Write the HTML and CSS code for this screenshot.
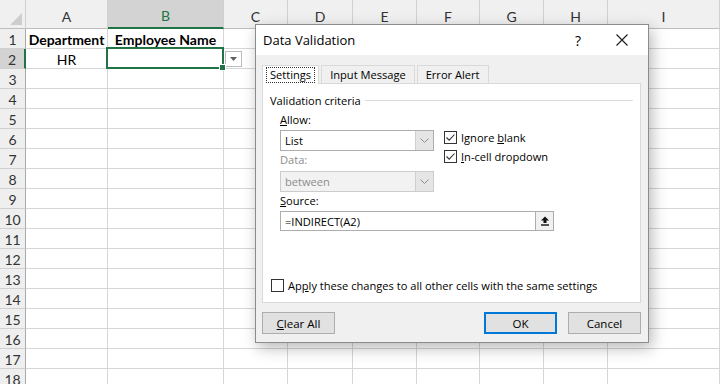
FILE: index.html
```html
<!DOCTYPE html>
<html lang="en">
<head>
    <meta charset="UTF-8">
    <title>Data Validation</title>
    <link rel="stylesheet" href="styles.css">
</head>
<body>
    <!-- Worksheet -->
    <div class="sheet">
        <div class="row head">
            <div class="corner"></div>
            <div class="ch">A</div>
            <div class="ch sel">B</div>
            <div class="ch">C</div>
            <div class="ch">D</div>
            <div class="ch">E</div>
            <div class="ch">F</div>
            <div class="ch">G</div>
            <div class="ch">H</div>
            <div class="ch">I</div>
        </div>
        <div class="row">
            <div class="rh">1</div>
            <div class="c bold">Department</div>
            <div class="c bold">Employee Name</div>
            <div></div><div></div><div></div><div></div><div></div><div></div><div></div>
        </div>
        <div class="row">
            <div class="rh sel">2</div>
            <div class="c">HR</div>
            <div class="c active">
                <span class="handle"></span>
                <span class="cell-dd">
                    <svg width="7" height="4" viewBox="0 0 7 4"><path d="M0 0 H7 L3.5 4 Z" fill="#606060"/></svg>
                </span>
            </div>
            <div></div><div></div><div></div><div></div><div></div><div></div><div></div>
        </div>
        <div class="row"><div class="rh">3</div><div></div><div></div><div></div><div></div><div></div><div></div><div></div><div></div><div></div></div>
        <div class="row"><div class="rh">4</div><div></div><div></div><div></div><div></div><div></div><div></div><div></div><div></div><div></div></div>
        <div class="row"><div class="rh">5</div><div></div><div></div><div></div><div></div><div></div><div></div><div></div><div></div><div></div></div>
        <div class="row"><div class="rh">6</div><div></div><div></div><div></div><div></div><div></div><div></div><div></div><div></div><div></div></div>
        <div class="row"><div class="rh">7</div><div></div><div></div><div></div><div></div><div></div><div></div><div></div><div></div><div></div></div>
        <div class="row"><div class="rh">8</div><div></div><div></div><div></div><div></div><div></div><div></div><div></div><div></div><div></div></div>
        <div class="row"><div class="rh">9</div><div></div><div></div><div></div><div></div><div></div><div></div><div></div><div></div><div></div></div>
        <div class="row"><div class="rh">10</div><div></div><div></div><div></div><div></div><div></div><div></div><div></div><div></div><div></div></div>
        <div class="row"><div class="rh">11</div><div></div><div></div><div></div><div></div><div></div><div></div><div></div><div></div><div></div></div>
        <div class="row"><div class="rh">12</div><div></div><div></div><div></div><div></div><div></div><div></div><div></div><div></div><div></div></div>
        <div class="row"><div class="rh">13</div><div></div><div></div><div></div><div></div><div></div><div></div><div></div><div></div><div></div></div>
        <div class="row"><div class="rh">14</div><div></div><div></div><div></div><div></div><div></div><div></div><div></div><div></div><div></div></div>
        <div class="row"><div class="rh">15</div><div></div><div></div><div></div><div></div><div></div><div></div><div></div><div></div><div></div></div>
        <div class="row"><div class="rh">16</div><div></div><div></div><div></div><div></div><div></div><div></div><div></div><div></div><div></div></div>
        <div class="row"><div class="rh">17</div><div></div><div></div><div></div><div></div><div></div><div></div><div></div><div></div><div></div></div>
        <div class="row"><div class="rh">18</div><div></div><div></div><div></div><div></div><div></div><div></div><div></div><div></div><div></div></div>
    </div>

    <!-- Data Validation dialog -->
    <div class="dialog">
        <div class="titlebar">
            <span class="title">Data Validation</span>
            <span class="help">?</span>
            <span class="close">
                <svg width="12" height="12" viewBox="0 0 12 12"><path d="M0.5 0.5 L11.5 11.5 M11.5 0.5 L0.5 11.5" stroke="#1a1a1a" stroke-width="1.1"/></svg>
            </span>
        </div>
        <div class="dlg-body">
            <div class="tabs">
                <div class="tab on"><span class="focus">Settings</span></div>
                <div class="tab">Input Message</div>
                <div class="tab">Error Alert</div>
            </div>
            <div class="panel">
                <div class="group"><span>Validation criteria</span><i class="rule"></i></div>
                <div class="criteria">
                    <div class="fields">
                        <div class="lbl"><u>A</u>llow:</div>
                        <div class="select">
                            <span class="val">List</span>
                            <span class="arrow"><svg width="9" height="5" viewBox="0 0 9 5"><path d="M0.5 0.5 L4.5 4.5 L8.5 0.5" fill="none" stroke="#8a8a8a"/></svg></span>
                        </div>
                        <div class="lbl dim">Data:</div>
                        <div class="select off">
                            <span class="val">between</span>
                            <span class="arrow"><svg width="9" height="5" viewBox="0 0 9 5"><path d="M0.5 0.5 L4.5 4.5 L8.5 0.5" fill="none" stroke="#8a8a8a"/></svg></span>
                        </div>
                    </div>
                    <div class="checks">
                        <div class="check">
                            <span class="box"><svg width="11" height="11" viewBox="0 0 11 11"><path d="M1.5 5.5 L4.2 8.2 L9.5 2.5" fill="none" stroke="#333" stroke-width="1.1"/></svg></span>
                            <span>Ignore <u>b</u>lank</span>
                        </div>
                        <div class="check">
                            <span class="box"><svg width="11" height="11" viewBox="0 0 11 11"><path d="M1.5 5.5 L4.2 8.2 L9.5 2.5" fill="none" stroke="#333" stroke-width="1.1"/></svg></span>
                            <span><u>I</u>n-cell dropdown</span>
                        </div>
                    </div>
                </div>
                <div class="lbl src-lbl"><u>S</u>ource:</div>
                <div class="source">
                    <span class="val">=INDIRECT(A2)</span>
                    <span class="pick">
                        <svg width="10" height="10" viewBox="0 0 10 10"><path d="M5 0.5 L9 4.5 H6.5 V7 H3.5 V4.5 H1 Z" fill="#111"/><rect x="1" y="8.3" width="8" height="1.4" fill="#111"/></svg>
                    </span>
                </div>
                <div class="check apply">
                    <span class="box"></span>
                    <span>Ap<u>p</u>ly these changes to all other cells with the same settings</span>
                </div>
            </div>
            <div class="buttons">
                <button class="btn"><u>C</u>lear All</button>
                <span class="spacer"></span>
                <button class="btn ok">OK</button>
                <button class="btn">Cancel</button>
            </div>
        </div>
    </div>
</body>
</html>
```

FILE: styles.css
```css
body {
    margin: 0;
    width: 720px;
    height: 384px;
    overflow: hidden;
    background: #fff;
    position: relative;
    font-family: Lato, "Open Sans", sans-serif;
}

/* Worksheet grid */
.sheet {
    display: flex;
    flex-direction: column;
}

.row {
    display: grid;
    grid-template-columns: 26px 82px 116px 64px 65px 64px 63px 64px 64px 112px;
    height: 20px;
}

.row > div {
    box-sizing: border-box;
    border-right: 1px solid #d6d6d6;
    border-bottom: 1px solid #d6d6d6;
}

.row.head {
    height: 29px;
}

.row.head > div {
    background: #f0f0f0;
    border-bottom: 1px solid #bdbdbd;
    border-right: 1px solid #d0d0d0;
}

.corner {
    position: relative;
}

.corner::after {
    content: '';
    position: absolute;
    right: 3px;
    bottom: 3px;
    border-left: 12px solid transparent;
    border-bottom: 12px solid #cdcdcd;
}

.ch {
    display: flex;
    align-items: center;
    justify-content: center;
    padding-top: 4px;
    font-size: 14px;
    color: #333;
}

.row.head > .ch.sel {
    background: #d3d3d3;
    color: #217346;
    border-bottom: 2px solid #217346;
}

.row > .rh {
    background: #efefef;
    border-right: 1px solid #a9a9a9;
    border-bottom: 1px solid #d0d0d0;
    font-size: 14px;
    color: #333;
    display: flex;
    align-items: center;
    justify-content: center;
    padding-top: 1px;
}

.row > .rh.sel {
    background: #d3d3d3;
    border-right: 2px solid #217346;
}

.c {
    display: flex;
    align-items: center;
    justify-content: center;
    font-size: 14px;
    color: #000;
    padding-top: 1px;
}

.bold {
    font-weight: bold;
}

.c.active {
    position: relative;
}

.c.active::after {
    content: '';
    position: absolute;
    left: -2px;
    top: -2px;
    right: -1px;
    bottom: -1px;
    border: 2px solid #217346;
}

.handle {
    position: absolute;
    right: -3px;
    bottom: -3px;
    width: 5px;
    height: 5px;
    background: #217346;
    border: 1px solid #fff;
    z-index: 1;
}

.cell-dd {
    position: absolute;
    left: 117px;
    top: 2px;
    width: 15px;
    height: 14px;
    border: 1px solid #bbb;
    background: #fff;
    display: flex;
    align-items: center;
    justify-content: center;
}

/* Dialog */
.dialog {
    position: absolute;
    left: 255px;
    top: 24px;
    width: 392px;
    height: 317px;
    border: 1px solid #8c8c8c;
    background: #f0f0f0;
    box-shadow: 3px 5px 14px rgba(0,0,0,0.28);
    font-family: "Open Sans", "Noto Sans", sans-serif;
    font-size: 11.1px;
    color: #000;
    display: flex;
    flex-direction: column;
}

.titlebar {
    height: 30px;
    background: #fff;
    display: flex;
    align-items: center;
    padding-left: 7px;
}

.title {
    font-size: 13px;
    flex: 1;
}

.help {
    font-size: 14px;
    width: 20px;
    text-align: center;
    margin-right: 22px;
}

.close {
    display: flex;
    width: 24px;
    margin-right: 14px;
    justify-content: center;
}

.dlg-body {
    padding: 10px 7px 0 6px;
}

.tabs {
    display: flex;
    padding-left: 2px;
    height: 18px;
    align-items: flex-end;
}

.tab {
    height: 18px;
    box-sizing: border-box;
    border: 1px solid #d9d9d9;
    border-bottom: none;
    padding: 0 8px;
    margin-right: 2px;
    display: flex;
    align-items: center;
    background: #f0f0f0;
}

.tab.on {
    background: #fff;
    margin-left: -2px;
    padding: 0 3px 0 3px;
    height: 19px;
    margin-bottom: -1px;
    position: relative;
    z-index: 1;
}

.focus {
    border: 1px dotted #333;
    padding: 0 3px;
    line-height: 14px;
}

.panel {
    height: 220px;
    box-sizing: border-box;
    background: #fff;
    border: 1px solid #d9d9d9;
    padding-top: 8px;
}

.group {
    display: flex;
    align-items: center;
    height: 16px;
    padding: 0 7px;
}

.group .rule {
    flex: 1;
    height: 1px;
    background: #dcdcdc;
    margin-left: 4px;
}

.criteria {
    display: flex;
    padding-left: 17px;
    margin-top: 4px;
}

.fields {
    width: 154px;
}

.lbl {
    height: 16px;
    line-height: 16px;
}

.lbl.dim {
    color: #8d8d8d;
    margin-top: 1px;
}

.select {
    margin-top: 2px;
    height: 21px;
    box-sizing: border-box;
    border: 1px solid #adadad;
    display: flex;
    align-items: center;
}

.select .val, .source .val {
    flex: 1;
    padding-left: 4px;
}

.select .arrow {
    width: 17px;
    height: 100%;
    background: #e5e5e5;
    border-left: 1px solid #cfcfcf;
    display: flex;
    align-items: center;
    justify-content: center;
}

.select.off {
    margin-top: 3px;
    border-color: #cccccc;
    background: #f2f2f2;
    color: #8d8d8d;
}

.checks {
    margin-left: 10px;
    margin-top: 17px;
    display: flex;
    flex-direction: column;
    gap: 3px;
}

.check {
    display: flex;
    align-items: center;
    height: 16px;
    gap: 4px;
}

.box {
    width: 11px;
    height: 11px;
    border: 1px solid #333;
    background: #fff;
    display: flex;
}

.src-lbl {
    margin: 1px 0 0 17px;
}

.source {
    margin: 2px 0 0 17px;
    width: 274px;
    height: 20px;
    box-sizing: border-box;
    border: 1px solid #adadad;
    display: flex;
    align-items: center;
}

.pick {
    width: 18px;
    height: 100%;
    box-sizing: border-box;
    border-left: 1px solid #adadad;
    background: #f0f0f0;
    display: flex;
    align-items: center;
    justify-content: center;
}

.check.apply {
    margin: 46px 0 0 8px;
}

.buttons {
    display: flex;
    margin-top: 9px;
    gap: 11px;
}

.spacer {
    flex: 1;
}

.btn {
    width: 73px;
    height: 22px;
    background: #e1e1e1;
    border: 1px solid #adadad;
    font-family: inherit;
    font-size: 11.5px;
    color: #000;
    padding: 0;
}

.btn.ok {
    border: 2px solid #0078d7;
}
```
